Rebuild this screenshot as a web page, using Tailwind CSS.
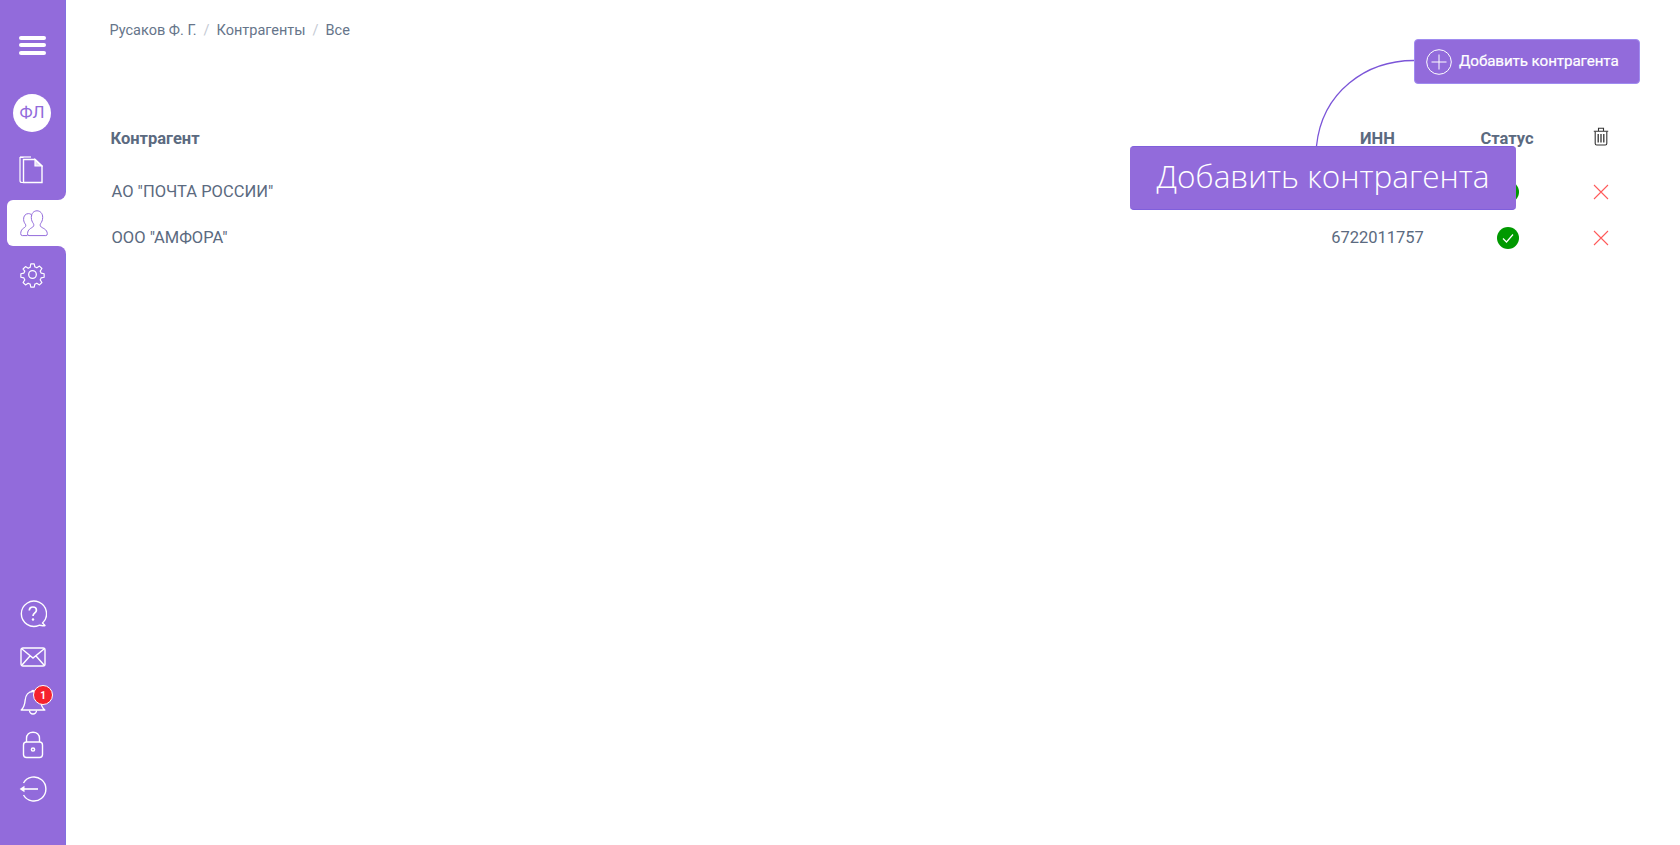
<!DOCTYPE html>
<html lang="ru">
<head>
    <meta charset="UTF-8">
    <title>Контрагенты</title>
    <script src="https://cdn.jsdelivr.net/npm/@tailwindcss/browser@4"></script>
</head>
<body class="bg-white font-['Roboto',sans-serif] text-[#5b6a80] overflow-hidden">
<div class="relative flex h-[845px] w-[1680px]">
    <!-- sidebar -->
    <aside class="flex w-[66px] shrink-0 flex-col justify-between bg-[#926bdb] border-r border-[#8270e0] pb-[34px]">
        <div class="flex flex-col">
            <div class="flex h-[30px] mt-[30px] flex-col items-center justify-center gap-[3.5px] pr-[1px]">
                <span class="block h-[4px] w-[27px] rounded-full bg-white"></span>
                <span class="block h-[4px] w-[27px] rounded-full bg-white"></span>
                <span class="block h-[4px] w-[27px] rounded-full bg-white"></span>
            </div>
            <div class="mt-[34px] flex justify-center pr-[1px]">
                <div class="flex h-[38px] w-[38px] items-center justify-center rounded-full bg-white text-[17px] text-[#926bdb]">ФЛ</div>
            </div>
            <div class="mt-[15px] flex h-[46px] items-center justify-center pr-[3px]">
                <svg width="24" height="28" viewBox="0 0 24 28" fill="none" stroke="white" stroke-width="1.2">
                    <path d="M4.5 1.5H1V24.5Q1 26.5 3 26.5H4.5"/>
                    <path d="M1 1H12"/>
                    <path d="M4.5 3.5H16L23 10V26.5H4.5Z" stroke-width="1.4"/>
                    <path d="M16 3.5V10H23Z" fill="white" fill-opacity="0.75"/>
                </svg>
            </div>
            <div class="relative mt-[7px] ml-[7px] flex h-[46px] w-[59px] items-center justify-center rounded-l-[6px] bg-white">
                <span class="absolute -top-[8px] right-0 h-[8px] w-[8px] bg-white"><span class="block h-full w-full rounded-br-[8px] bg-[#926bdb]"></span></span>
                <span class="absolute -bottom-[8px] right-0 h-[8px] w-[8px] bg-white"><span class="block h-full w-full rounded-tr-[8px] bg-[#926bdb]"></span></span>
                <svg class="-ml-[6px]" width="28" height="27" viewBox="0 0 28 27" fill="none" stroke="#926bdb" stroke-width="1">
                    <path d="M11.8 5.2C11 4.2 9.8 3.6 8.5 3.6C5.5 3.6 3.4 6 3.6 9.4C3.7 11.6 4.6 13.2 5.4 14.2C6 15.2 5.9 16.4 5 17.2C3.4 18.4 .9 19.2 .7 23.5Q.6 25.6 2.4 25.6H7.5"/>
                    <path d="M17 .8C13.8 .8 11.3 3.4 11.3 7.4C11.3 10.2 12.4 12.2 13.3 13.4C14.1 14.6 14 16 12.8 17C11 18.4 7.8 19.2 7.5 23.6Q7.4 25.6 9 25.6H25.8Q27.4 25.6 27.3 23.6C27 19.2 23 18.4 21.2 17C20 16 19.9 14.6 20.7 13.4C21.6 12.2 22.7 10.2 22.7 7.4C22.7 3.4 20.2 .8 17 .8Z"/>
                </svg>
            </div>
            <div class="mt-[5px] flex h-[46px] items-center justify-center">
                <svg width="27" height="27" viewBox="0 0 24 24" fill="none" stroke="white" stroke-width="1.15" stroke-linejoin="round">
                    <path d="M10.3 1.5h3.4l.6 3a8 8 0 0 1 2 .9l2.6-1.7 2.4 2.4-1.7 2.6a8 8 0 0 1 .9 2l3 .6v3.4l-3 .6a8 8 0 0 1-.9 2l1.7 2.6-2.4 2.4-2.6-1.7a8 8 0 0 1-2 .9l-.6 3h-3.4l-.6-3a8 8 0 0 1-2-.9l-2.6 1.7-2.4-2.4 1.7-2.6a8 8 0 0 1-.9-2l-3-.6v-3.4l3-.6a8 8 0 0 1 .9-2L2.7 6.6l2.4-2.4 2.6 1.7a8 8 0 0 1 2-.9z" transform="translate(1.2 1.2) scale(.9)"/>
                    <circle cx="12" cy="12" r="3.4"/>
                </svg>
            </div>
        </div>
        <div class="flex flex-col">
            <div class="flex h-11 items-center justify-center pt-[2px]">
                <svg width="28" height="28" viewBox="0 0 28 28" fill="none" stroke="white" stroke-width="1.4">
                    <path d="M26 25.5L23.5 23A12.6 12.6 0 1 0 20 25.3C21.8 25 24 26.4 26 25.5Z" stroke-linejoin="round"/>
                    <path d="M10.3 10.6C10.3 8.4 12 7 13.9 7C15.9 7 17.4 8.4 17.4 10.2C17.4 12.8 14 13 14 16" stroke-width="1.7"/>
                    <circle cx="14" cy="19.5" r="1.2" fill="white" stroke="none"/>
                </svg>
            </div>
            <div class="flex h-11 items-center justify-center">
                <svg width="26" height="20" viewBox="0 0 26 20" fill="none" stroke="white" stroke-width="1.4">
                    <rect x="1" y="1" width="24" height="18" rx="2"/>
                    <path d="M2 2L13 11L24 2M2 18L10 9M24 18L16 9"/>
                </svg>
            </div>
            <div class="relative flex h-11 items-center justify-center">
                <svg width="26" height="30" viewBox="0 0 26 30" fill="none" stroke="white" stroke-width="1.4" stroke-linejoin="round">
                    <path d="M1.2 24C4 21.5 4.8 18.5 5.2 14C5.6 9 8.5 5.5 12.8 5.5C17 5.5 20 9 20.4 14C20.8 18.5 21.6 21.5 24.8 24Z"/>
                    <path d="M9.5 24.5A3.5 3.5 0 0 0 16.5 24.5"/>
                    <path d="M11.5 5.5A1.6 1.6 0 0 1 14.5 5.5"/>
                </svg>
                <span class="absolute left-[33px] top-[6px] flex h-[20px] w-[20px] items-center justify-center rounded-full border border-white bg-[#f5222d] text-[10px] font-bold text-white">1</span>
            </div>
            <div class="flex h-11 items-center justify-center">
                <svg width="22" height="28" viewBox="0 0 22 28" fill="none" stroke="white" stroke-width="1.4">
                    <rect x="1.5" y="11" width="19" height="15.5" rx="3"/>
                    <path d="M4.5 11V7.5C4.5 3.5 7.3 1.2 11 1.2C14.7 1.2 17.5 3.5 17.5 7.5V11"/>
                    <circle cx="11" cy="18.5" r="1.6" stroke-width="1.5"/>
                </svg>
            </div>
            <div class="flex h-11 items-center justify-center">
                <svg width="28" height="26" viewBox="0 0 28 26" fill="none" stroke="white" stroke-width="1.4">
                    <path d="M4.5 7A12 12 0 1 1 4.5 19"/>
                    <path d="M4 13H19" stroke-width="1.6"/>
                    <path d="M0.6 13L5.5 9.8V16.2Z" fill="white" stroke="none"/>
                </svg>
            </div>
        </div>
    </aside>

    <!-- content -->
    <main class="flex-1 pl-[44.5px] pr-[40px]">
        <div class="flex items-start justify-between">
            <nav class="-ml-[1px] mt-[22px] flex items-center text-[14.5px] leading-[18px] text-[#66758a]">
                <span>Русаков Ф. Г.</span>
                <span class="mx-[7px] text-[#c4cad4]">/</span>
                <span>Контрагенты</span>
                <span class="mx-[7px] text-[#c4cad4]">/</span>
                <span>Все</span>
            </nav>
            <button class="mt-[39px] flex h-[45px] w-[226px] items-center rounded-[4px] border border-[#a08cf0] bg-[#926bdb] pl-[11px] text-white">
                <svg width="26" height="26" viewBox="0 0 26 26" fill="none" stroke="white" stroke-width="1">
                    <circle cx="13" cy="13" r="12.3"/>
                    <path d="M13 5.5V20.5M5.5 13H20.5"/>
                </svg>
                <span class="ml-[7px] text-[15.2px] tracking-[-0.1px] [-webkit-text-stroke:0.2px_white]">Добавить контрагента</span>
            </button>
        </div>
        <div class="mr-[21.5px] mt-[43px] grid grid-cols-[1fr_110px_150px_36px] items-center text-[16.5px]">
            <div class="h-[24px] font-bold leading-[24px]">Контрагент</div>
            <div class="h-[24px] text-center font-bold leading-[24px]">ИНН</div>
            <div class="h-[24px] pr-[1px] text-center font-bold leading-[24px]">Статус</div>
            <div class="flex h-[24px] items-start justify-center">
                <svg width="16" height="19" viewBox="0 0 16 19" fill="none" stroke="#333" stroke-width="1.1">
                    <path d="M.8 4.2H15.2M5.5 4V1.2H10.5V4"/>
                    <path d="M2.2 4.5V16.5Q2.2 18 3.7 18H12.3Q13.8 18 13.8 16.5V4.5"/>
                    <path d="M5.2 7V15.5M8 7V15.5M10.8 7V15.5" stroke-width="1.3"/>
                </svg>
            </div>

            <div class="mt-[29px] flex h-[24px] items-center pl-[1px]">АО "ПОЧТА РОССИИ"</div>
            <div class="mt-[29px] h-[24px] text-center leading-[24px]">7724261610</div>
            <div class="mt-[29px] flex h-[24px] items-center justify-center">
                <svg width="22" height="22" viewBox="0 0 22 22"><circle cx="11" cy="11" r="11" fill="#009900"/><path d="M6 11.5L9.5 15L16 7.5" fill="none" stroke="white" stroke-width="1.2"/></svg>
            </div>
            <div class="mt-[29px] flex h-[24px] items-center justify-center">
                <svg width="16" height="16" viewBox="0 0 16 16" stroke="#ff5a5a" stroke-width="1.1"><path d="M1 1L15 15M15 1L1 15"/></svg>
            </div>

            <div class="mt-[22px] flex h-[24px] items-center pl-[1px]">ООО "АМФОРА"</div>
            <div class="mt-[22px] h-[24px] text-center leading-[24px]">6722011757</div>
            <div class="mt-[22px] flex h-[24px] items-center justify-center">
                <svg width="22" height="22" viewBox="0 0 22 22"><circle cx="11" cy="11" r="11" fill="#009900"/><path d="M6 11.5L9.5 15L16 7.5" fill="none" stroke="white" stroke-width="1.2"/></svg>
            </div>
            <div class="mt-[22px] flex h-[24px] items-center justify-center">
                <svg width="16" height="16" viewBox="0 0 16 16" stroke="#ff5a5a" stroke-width="1.1"><path d="M1 1L15 15M15 1L1 15"/></svg>
            </div>
        </div>
    </main>

    <!-- onboarding hint over the table -->
    <svg class="absolute left-[1310px] top-[54px]" width="110" height="95" viewBox="0 0 110 95" fill="none" stroke="#7b55d8" stroke-width="1.3">
        <path d="M6.5 92C12 38 56 6.5 104 6.5"/>
    </svg>
    <div class="absolute left-[1130px] top-[146px] flex h-[64px] w-[386px] items-center justify-center rounded-[4px] border-t border-b border-[#7f5fdc] bg-[#926bdb] pb-[5px] font-['Open_Sans',sans-serif] text-[31.5px] font-light text-white">Добавить контрагента</div>
</div>
</body>
</html>
